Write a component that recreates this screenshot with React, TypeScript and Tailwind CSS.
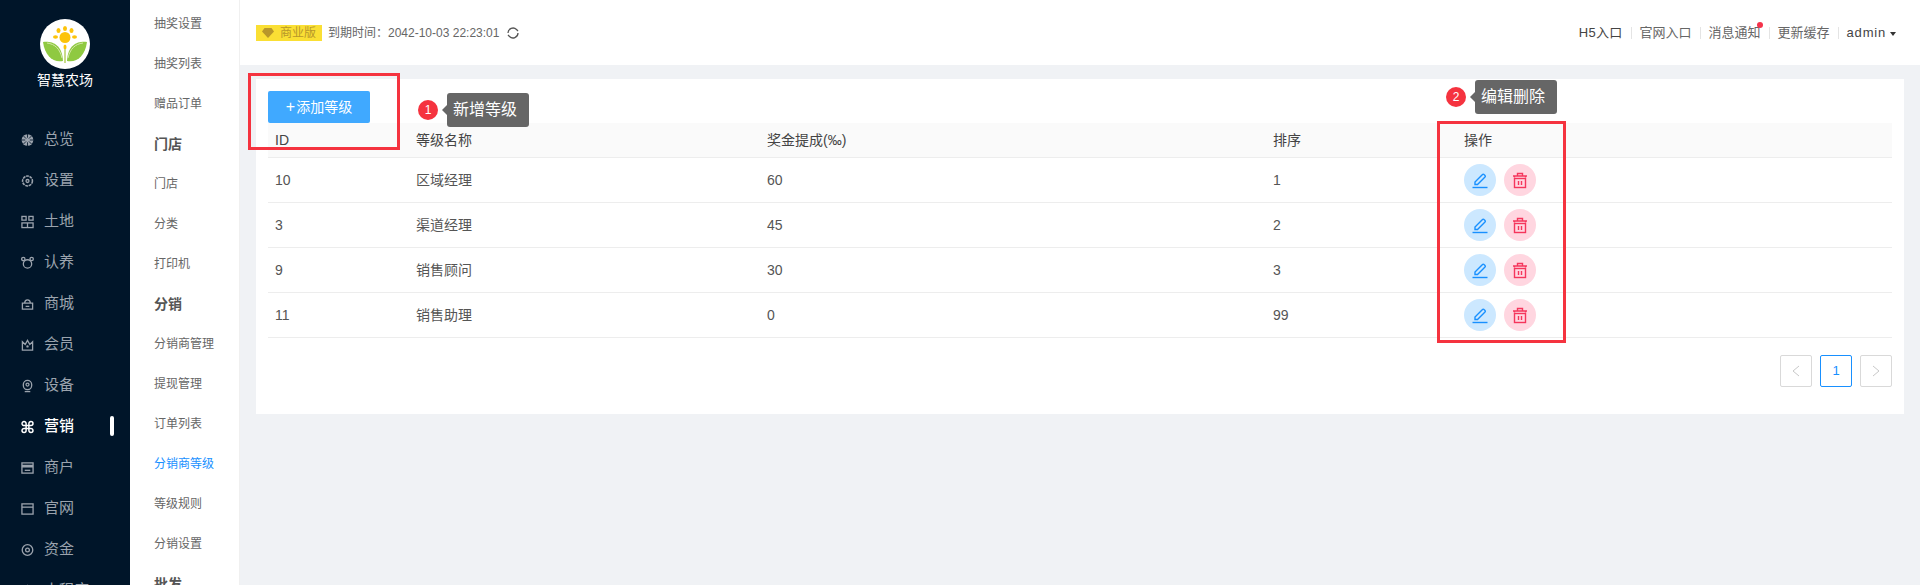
import React from 'react';

const font = 'font-["Liberation_Sans","Noto_Sans_CJK_SC",sans-serif]';

const Ico = ({ children }: { children: React.ReactNode }) => (
  <svg width="13" height="14" viewBox="0 0 14 14" fill="none" stroke="currentColor" strokeWidth="1.4" className="shrink-0">
    {children}
  </svg>
);

const mainMenu: { label: string; active?: boolean; icon: React.ReactNode }[] = [
  { label: '总览', icon: <><circle cx="7" cy="7" r="6.300" fill="currentColor" stroke="none" /><path d="M7 .5v4M7 9.500v4M.5 7h4M9.500 7h4M2.500 2.500l3 3M8.500 8.500l3 3M11.500 2.500l-3 3M5.500 8.500l-3 3" stroke="#001529" strokeWidth="0.9" /></> },
  { label: '设置', icon: <><circle cx="7" cy="7" r="5.300" strokeDasharray="3 0.8" strokeWidth="1.700" /><circle cx="7" cy="7" r="1.600" /></> },
  { label: '土地', icon: <><rect x="1" y="1" width="4.500" height="4" /><rect x="8.500" y="1" width="4.500" height="4" /><rect x="1" y="8" width="12" height="5" /><path d="M7 8v5" /></> },
  { label: '认养', icon: <><circle cx="7" cy="8" r="4.500" /><circle cx="2.500" cy="2.700" r="1.800" /><circle cx="11.500" cy="2.700" r="1.800" /></> },
  { label: '商城', icon: <><path d="M1.500 6h11v6.500h-11z" /><path d="M4 6a3 3.500 0 0 1 6 0M5 9.500h4" /></> },
  { label: '会员', icon: <><path d="M1.500 3.500 4.500 6.500 7 2l2.500 4.500 3-3V12.500h-11z" /><circle cx="7" cy="8.500" r=".6" /></> },
  { label: '设备', icon: <><rect x="2.500" y="1" width="9" height="10" rx="4.500" /><circle cx="7" cy="5.500" r="1.600" /><path d="M4 13h6" /></> },
  { label: '营销', active: true, icon: <path d="M5.500 5.500H3.500a2.200 2.200 0 1 1 2-2.200zM8.500 5.500V3.300a2.200 2.200 0 1 1 2.200 2.200zM5.500 8.500v2.200a2.200 2.200 0 1 1-2.200-2.200zM8.500 8.500h2.200a2.200 2.200 0 1 1-2.200 2.200zM5.500 5.500h3v3h-3z" strokeWidth="1.600" /> },
  { label: '商户', icon: <><rect x="1" y="1.500" width="12" height="11" /><path d="M1 5h12" strokeWidth="3" /><path d="M4 9.500h6" /></> },
  { label: '官网', icon: <><rect x="1" y="1.500" width="12" height="11" /><path d="M1 5h12" /></> },
  { label: '资金', icon: <><circle cx="7" cy="7" r="5.700" /><circle cx="7" cy="7" r="2" /></> },
  { label: '小程序', icon: <path d="M7 1 2 5h10z" /> },
];

const subMenu: { label: string; head?: boolean; active?: boolean }[] = [
  { label: '抽奖设置' },
  { label: '抽奖列表' },
  { label: '赠品订单' },
  { label: '门店', head: true },
  { label: '门店' },
  { label: '分类' },
  { label: '打印机' },
  { label: '分销', head: true },
  { label: '分销商管理' },
  { label: '提现管理' },
  { label: '订单列表' },
  { label: '分销商等级', active: true },
  { label: '等级规则' },
  { label: '分销设置' },
  { label: '批发', head: true },
];

const rows = [
  { id: '10', name: '区域经理', rate: '60', sort: '1' },
  { id: '3', name: '渠道经理', rate: '45', sort: '2' },
  { id: '9', name: '销售顾问', rate: '30', sort: '3' },
  { id: '11', name: '销售助理', rate: '0', sort: '99' },
];

const Logo = () => (
  <svg width="50" height="50" viewBox="0 0 50 50">
    <circle cx="25" cy="25" r="25" fill="#fff" />
    <g fill="#fcc30b">
      <circle cx="25" cy="18.500" r="5.500" />
      <ellipse cx="25" cy="9.500" rx="2" ry="2.500" />
      <ellipse cx="18.500" cy="11.500" rx="2" ry="2.500" />
      <ellipse cx="31.500" cy="11.500" rx="2" ry="2.500" />
      <ellipse cx="15.500" cy="18" rx="2.500" ry="1.800" />
      <ellipse cx="34.500" cy="18" rx="2.500" ry="1.800" />
      <ellipse cx="25" cy="28" rx="1.500" ry="2.500" />
    </g>
    <path d="M3 23c9-1 19 2 20 19C13 44 5 37 3 23z" fill="#8fc941" />
    <path d="M47 23c-9-1-19 2-20 19 10 2 18-5 20-19z" fill="#8fc941" />
    <path d="M7 24c8 1 13 6 15 15M43 24c-8 1-13 6-15 15" stroke="#d5e8a8" strokeWidth="1" fill="none" />
    <path d="M25 30v14" stroke="#c9dc8a" strokeWidth="2" />
  </svg>
);

const ActionButtons = () => (
  <div className="flex gap-2">
    <button className="w-8 h-8 rounded-full bg-[#cce8ff] flex items-center justify-center">
      <svg width="16" height="17" viewBox="0 0 16 17" fill="none" stroke="#1890ff" strokeWidth="1.400">
        <path d="M3 12.500V10l7.500-7.500a1 1 0 0 1 1.500 0l1 1a1 1 0 0 1 0 1.500L5.500 12.500z" />
        <path d="M0.500 15.500h15" />
      </svg>
    </button>
    <button className="w-8 h-8 rounded-full bg-[#ffd6e0] flex items-center justify-center">
      <svg width="16" height="17" viewBox="0 0 16 17" fill="none" stroke="#f5365c" strokeWidth="1.400">
        <path d="M1 4h14M5.500 4V1.500h5V4M2.500 4v1.500M13.500 4v1.500" />
        <rect x="2.500" y="6.500" width="11" height="9" />
        <path d="M6.500 9v4M9.500 9v4" />
      </svg>
    </button>
  </div>
);

const gridCols = 'grid grid-cols-[140px_351px_506px_191px_1fr]';

export default function App() {
  return (
    <div className={`relative flex h-[585px] w-[1920px] overflow-hidden bg-[#f0f2f5] ${font}`}>
      {/* first level menu */}
      <aside className="w-[130px] shrink-0 bg-[#001529] text-[#9ba3ad]">
        <div className="flex flex-col items-center pt-[19px]">
          <Logo />
          <div className="mt-[1px] text-[14px] leading-[20px] text-white">智慧农场</div>
        </div>
        <ul className="mt-[29px]">
          {mainMenu.map((m) => (
            <li key={m.label} className={`relative flex h-[41px] items-center gap-[10px] pl-[21px] text-[15px] ${m.active ? 'text-white font-medium' : ''}`}>
              <Ico>{m.icon}</Ico>
              <span>{m.label}</span>
              {m.active && <span className="absolute left-[110px] top-[10px] h-5 w-1 rounded bg-white" />}
            </li>
          ))}
        </ul>
      </aside>

      {/* second level menu */}
      <aside className="w-[110px] shrink-0 bg-white border-r border-[#f0f0f0]">
        <ul className="pt-[4px]">
          {subMenu.map((s, i) => (
            <li
              key={i}
              className={`flex h-[40px] items-center pl-[24px] ${s.head ? 'text-[14px] font-bold text-[#555]' : 'text-[12px] text-[#666]'} ${s.active ? 'text-[#1890ff]' : ''}`}
            >
              {s.label}
            </li>
          ))}
        </ul>
      </aside>

      <div className="flex-1 min-w-0">
        <header className="flex h-[65px] items-center justify-between bg-white pl-[16px] pr-[24px]">
          <div className="flex items-center text-[12px] text-[#666]">
            <span className="flex h-4 w-[66px] items-center gap-[6px] bg-[#fadf34] pl-[6px] text-[#b8972a]">
              <svg width="12" height="10" viewBox="0 0 12 10" fill="#b8972a"><path d="M2.500 0h7L12 3.500 6 10 0 3.500z" /></svg>
              商业版
            </span>
            <span className="ml-[6px]">到期时间：2042-10-03 22:23:01</span>
            <svg className="ml-[8px]" width="12" height="12" viewBox="0 0 12 12" fill="none" stroke="#555" strokeWidth="1.300">
              <path d="M1 6a5 5 0 0 1 8.500-3.500L11 4M11 6a5 5 0 0 1-8.500 3.500L1 8" />
            </svg>
          </div>
          <div className="flex items-center text-[13px] text-[#666]">
            <span className="tracking-[0.3px] text-[#444]">H5入口</span>
            <i className="mx-[8px] h-3 w-px bg-[#e4e4e4]" />
            <span>官网入口</span>
            <i className="mx-[8px] h-3 w-px bg-[#e4e4e4]" />
            <span className="relative">
              消息通知
              <i className="absolute right-[-2px] top-[-1px] h-[6px] w-[6px] rounded-full bg-[#f5334a]" />
            </span>
            <i className="mx-[8px] h-3 w-px bg-[#e4e4e4]" />
            <span>更新缓存</span>
            <i className="mx-[8px] h-3 w-px bg-[#e4e4e4]" />
            <span className="tracking-[0.8px] text-[#444]">admin</span>
            <i className="ml-[4px] mt-[2px] border-x-[3px] border-t-[4px] border-x-transparent border-t-[#333]" />
          </div>
        </header>

        <main className="px-[16px] pt-[14px]">
          <div className="h-[335px] bg-white px-[12px] pt-[12px]">
            <button className="flex h-[32px] w-[102px] items-center justify-center rounded-[2px] bg-[#40a9ff] text-[14px] text-white">
              <span className="mr-[1px] text-[16px] leading-none">+</span>添加等级
            </button>
            <div className={`${gridCols} h-[35px] items-center border-b border-[#ededed] bg-[#fafafa] text-[14px] text-[#444]`}>
              <div className="pl-[7px]">ID</div>
              <div className="pl-[8px]">等级名称</div>
              <div className="pl-[8px]">奖金提成(‰)</div>
              <div className="pl-[8px]">排序</div>
              <div className="pl-[8px]">操作</div>
            </div>
            {rows.map((r) => (
              <div key={r.id} className={`${gridCols} h-[45px] items-center border-b border-[#ededed] text-[14px] text-[#555]`}>
                <div className="pl-[7px]">{r.id}</div>
                <div className="pl-[8px]">{r.name}</div>
                <div className="pl-[8px]">{r.rate}</div>
                <div className="pl-[8px]">{r.sort}</div>
                <div className="pl-[8px]"><ActionButtons /></div>
              </div>
            ))}
            <div className="mt-[17px] flex justify-end gap-2">
              <span className="flex h-8 w-8 items-center justify-center rounded-[2px] border border-[#d9d9d9]">
                <svg width="8" height="12" viewBox="0 0 8 12" fill="none" stroke="#c8c8c8"><path d="M7 1 1 6l6 5" /></svg>
              </span>
              <span className="flex h-8 w-8 items-center justify-center rounded-[2px] border border-[#1890ff] text-[13px] text-[#1890ff]">1</span>
              <span className="flex h-8 w-8 items-center justify-center rounded-[2px] border border-[#d9d9d9]">
                <svg width="8" height="12" viewBox="0 0 8 12" fill="none" stroke="#c8c8c8"><path d="m1 1 6 5-6 5" /></svg>
              </span>
            </div>
          </div>
        </main>
      </div>

      {/* tutorial marks over the page */}
      <div className="absolute left-[248px] top-[73px] h-[77px] w-[152px] border-[3px] border-[#f5333f]" />
      <div className="absolute left-[1437px] top-[121px] h-[222px] w-[129px] border-[3px] border-[#f5333f]" />
      <Mark n="1" x="left-[418px]" y="top-[100px]" />
      <Tip text="新增等级" x="left-[447px]" y="top-[93px]" />
      <Mark n="2" x="left-[1446px]" y="top-[87px]" />
      <Tip text="编辑删除" x="left-[1475px]" y="top-[80px]" />
    </div>
  );
}

function Mark({ n, x, y }: { n: string; x: string; y: string }) {
  return (
    <span className={`absolute ${x} ${y} flex h-5 w-5 items-center justify-center rounded-full bg-[#f5333f] text-[12px] text-white`}>
      {n}
    </span>
  );
}

function Tip({ text, x, y }: { text: string; x: string; y: string }) {
  return (
    <span className={`absolute ${x} ${y} flex h-[34px] w-[82px] items-center rounded-[3px] bg-[#666] pl-[6px] text-[16px] text-white`}>
      <i className="absolute left-[-5px] top-[12px] border-y-[5px] border-r-[5px] border-y-transparent border-r-[#666]" />
      {text}
    </span>
  );
}
